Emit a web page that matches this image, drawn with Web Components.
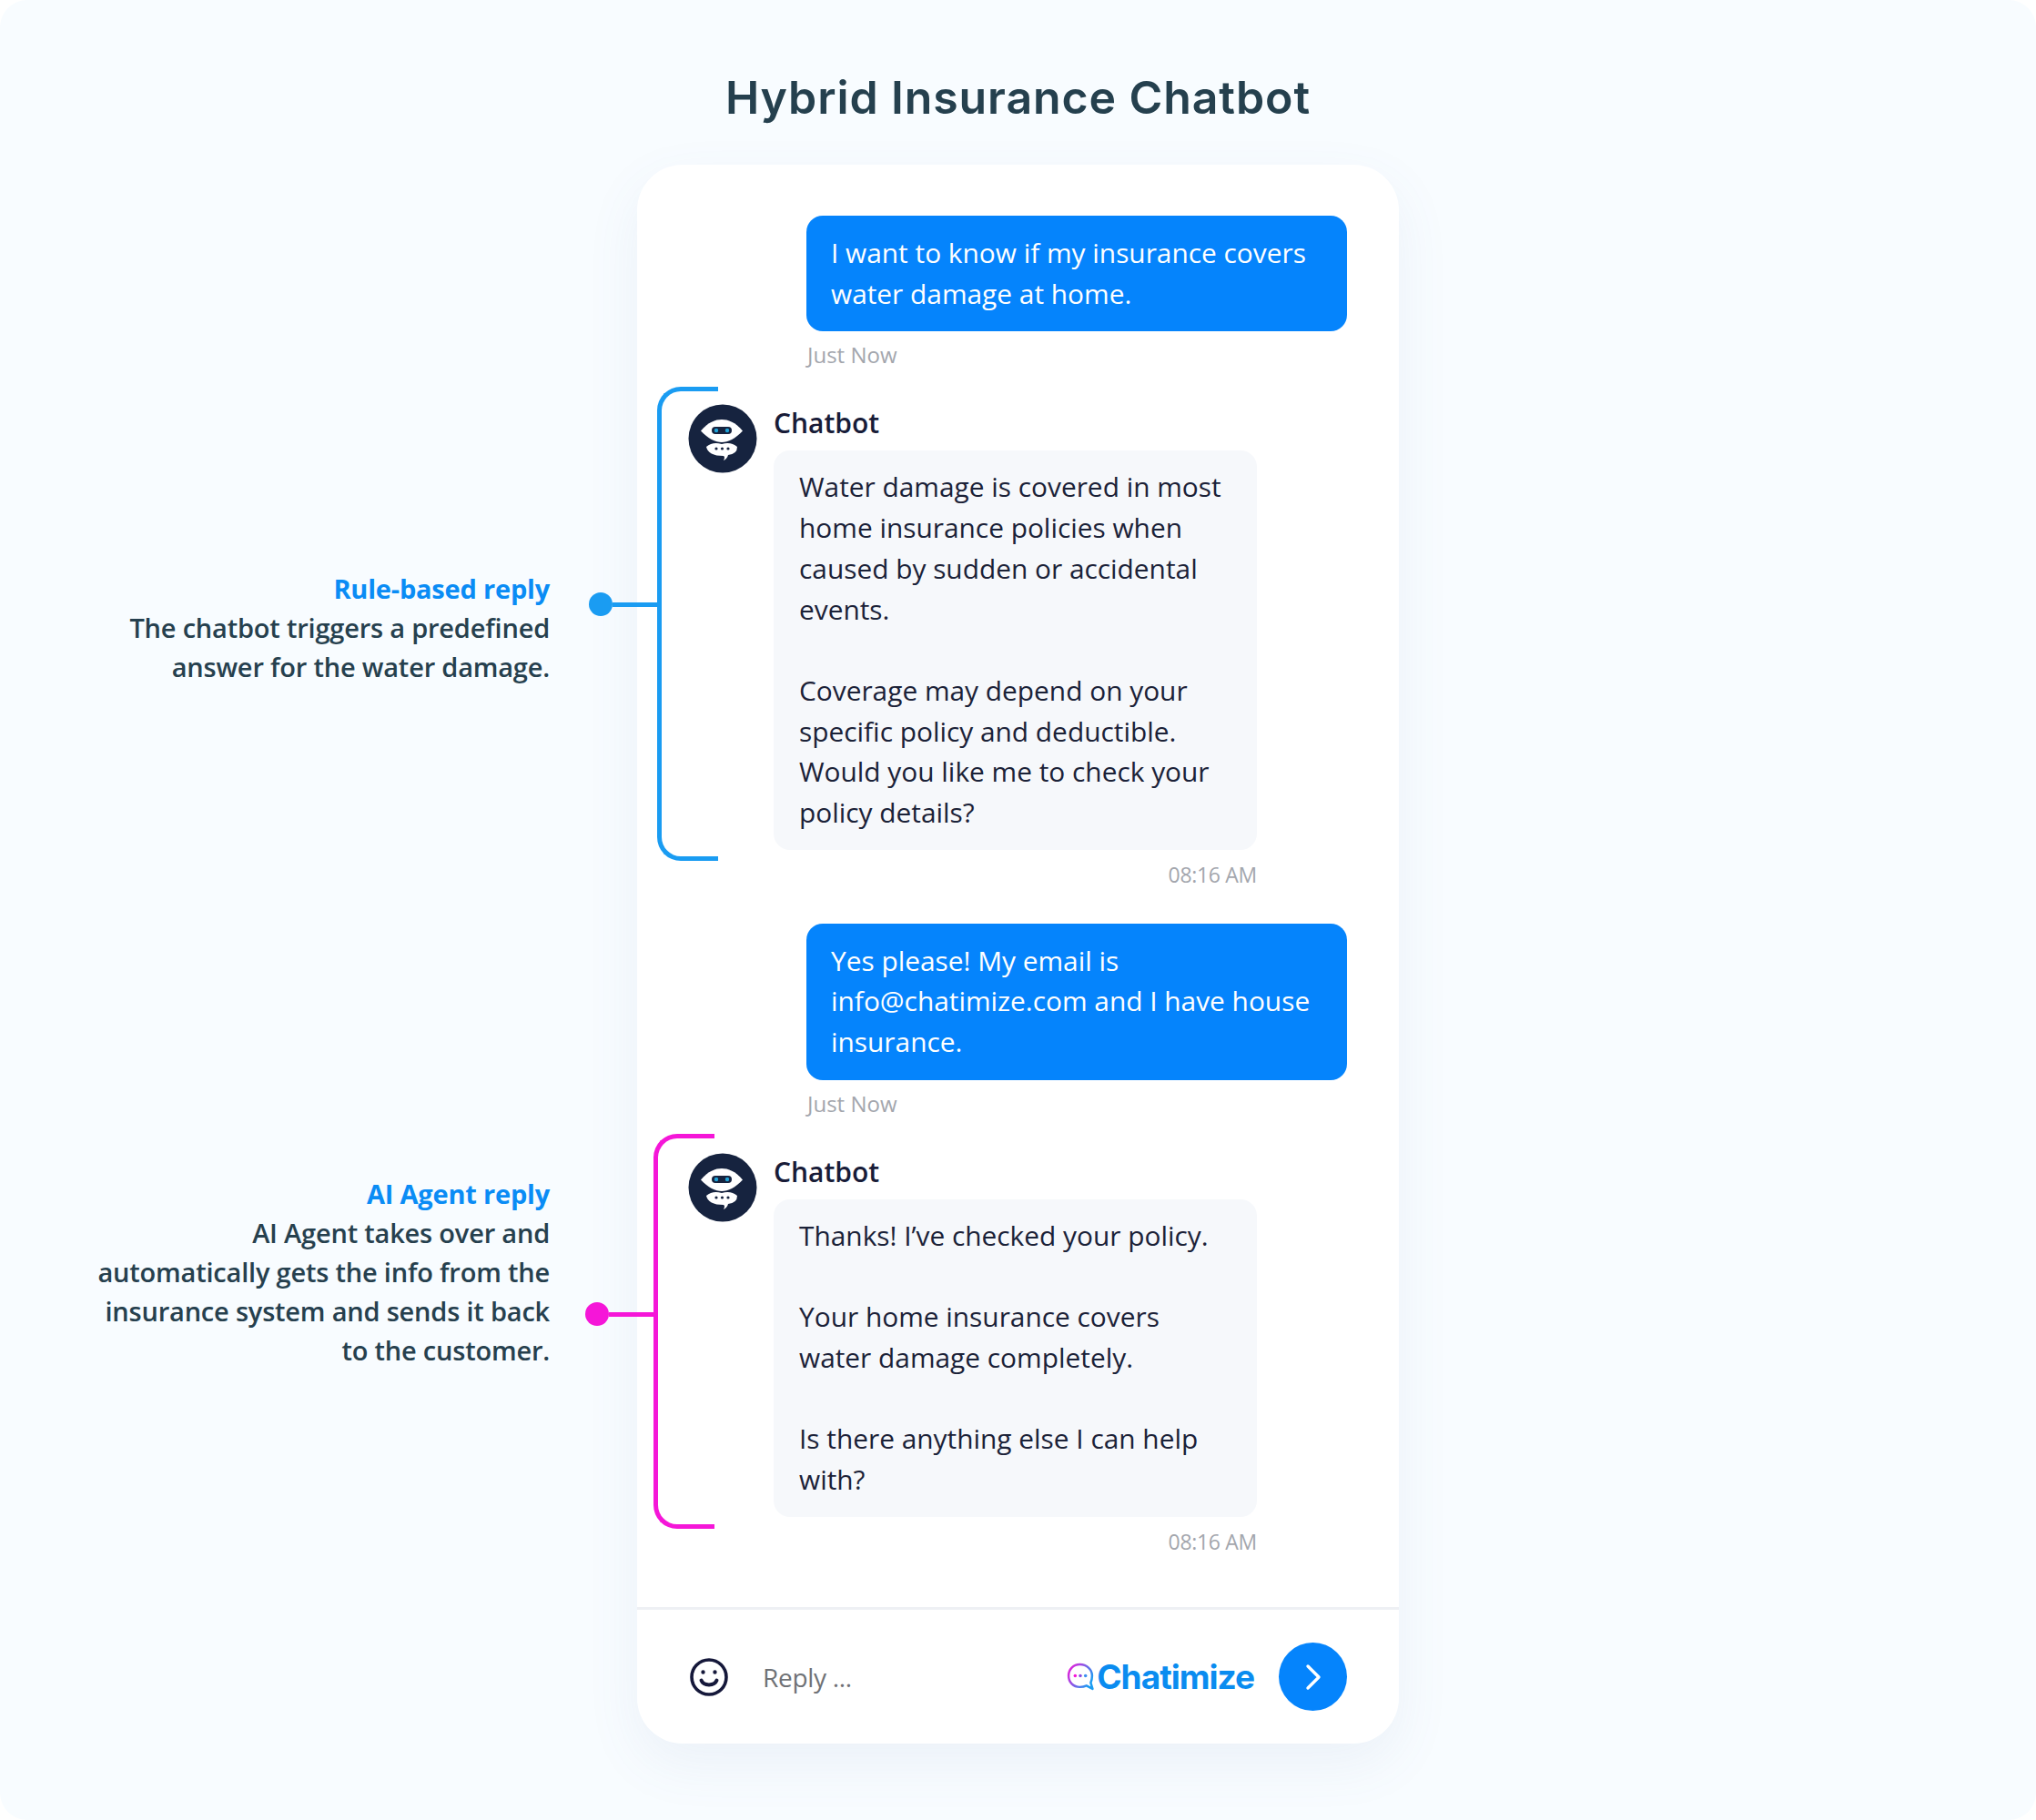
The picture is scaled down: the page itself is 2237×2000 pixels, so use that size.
<!DOCTYPE html>
<html lang="en">
<head>
<meta charset="utf-8">
<title>Hybrid Insurance Chatbot</title>
<style>
    html, body {
        margin: 0;
        background: #ffffff;
    }
</style>
</head>
<body>
<hybrid-page>
    <span slot="title">Hybrid Insurance Chatbot</span>

    <side-note slot="notes" heading="Rule-based reply" color="#1a9cf2" dot="39" offset="444" line="62" dotgap="25">
        The chatbot triggers a predefined<br>answer for the water damage.
    </side-note>
    <side-note slot="notes" heading="AI Agent reply" color="#f516d8" dot="154" offset="536" line="63" dotgap="21">
        AI Agent takes over and<br>automatically gets the info from the<br>insurance system and sends it back<br>to the customer.
    </side-note>

    <chat-card>
        <user-message time="Just Now">I want to know if my insurance covers water damage at home.</user-message>
        <bot-message time="08:16 AM" color="#1a9cf2" left="-34" top="-23" bottom="31" gap="38">
            Water damage is covered in most home insurance policies when caused by sudden or accidental events.<br><br>Coverage may depend on your specific policy and deductible. Would you like me to check your policy details?
        </bot-message>
        <user-message time="Just Now">Yes please! My email is info@chatimize.com and I have house insurance.</user-message>
        <bot-message time="08:16 AM" color="#f516d8" left="-38" top="-25" bottom="30" gap="57">
            Thanks! I’ve checked your policy.<br><br>Your home insurance covers water damage completely.<br><br>Is there anything else I can help with?
        </bot-message>
        <chat-footer slot="footer"></chat-footer>
    </chat-card>
</hybrid-page>

<script>
class HybridPage extends HTMLElement {
    connectedCallback() {
        this.attachShadow({mode: 'open'}).innerHTML = `
        <style>
            :host {
                display: block;
                height: 2000px;
                background: #f8fcff;
                border-radius: 30px;
                overflow: hidden;
            }
            h1 {
                margin: 0;
                height: 181px;
                padding-top: 78px;
                box-sizing: border-box;
                text-align: center;
                font: 600 50px/58px Inter, sans-serif;
                letter-spacing: 0.9px;
                color: #25404e;
            }
            .stage {
                display: flex;
            }
            .notes {
                flex: 0 0 700px;
                min-width: 0;
                display: flex;
                flex-direction: column;
                position: relative;
                z-index: 1;
            }
        </style>
        <h1><slot name="title"></slot></h1>
        <div class="stage">
            <div class="notes"><slot name="notes"></slot></div>
            <slot></slot>
        </div>
        `;
    }
}

class SideNote extends HTMLElement {
    connectedCallback() {
        const color = this.getAttribute('color');
        this.attachShadow({mode: 'open'}).innerHTML = `
        <style>
            :host {
                display: flex;
                width: 700px;
                margin-top: ${this.getAttribute('offset')}px;
                font: 600 29px/43px "Open Sans", sans-serif;
                letter-spacing: -0.2px;
                color: #26404e;
            }
            .text {
                flex: 0 0 604px;
                text-align: right;
                white-space: nowrap;
            }
            .heading {
                font-weight: 700;
                color: #0a8cf5;
            }
            .link {
                flex: none;
                display: flex;
                align-items: center;
                height: 26px;
                margin: ${this.getAttribute('dot') - 13}px 0 0 ${this.getAttribute('dotgap') * 1 + 18}px;
            }
            .dot {
                width: 26px;
                height: 26px;
                border-radius: 50%;
                background: ${color};
            }
            .line {
                width: ${this.getAttribute('line') - 13}px;
                height: 5px;
                background: ${color};
            }
        </style>
        <div class="text">
            <div class="heading">${this.getAttribute('heading')}</div>
            <slot></slot>
        </div>
        <div class="link"><div class="dot"></div><div class="line"></div></div>
        `;
    }
}

class ChatCard extends HTMLElement {
    connectedCallback() {
        this.attachShadow({mode: 'open'}).innerHTML = `
        <style>
            :host {
                display: block;
                box-sizing: border-box;
                width: 837px;
                height: 1735px;
                padding-top: 56px;
                background: #ffffff;
                border-radius: 50px;
                box-shadow: 0 22px 60px rgba(90, 120, 170, 0.08);
            }
            .messages {
                height: 1529px;
            }
        </style>
        <div class="messages"><slot></slot></div>
        <slot name="footer"></slot>
        `;
    }
}

class UserMessage extends HTMLElement {
    connectedCallback() {
        this.attachShadow({mode: 'open'}).innerHTML = `
        <style>
            :host {
                display: block;
                margin: 0 57px 0 186px;
                font: 400 29.85px/44.7px "Open Sans", sans-serif;
            }
            .bubble {
                padding: 19px 27px;
                border-radius: 18px;
                background: #0584fc;
                color: #ffffff;
            }
            .time {
                margin-top: 10px;
                padding-left: 1px;
                font-size: 24px;
                line-height: 32px;
                color: #a3a6ad;
            }
        </style>
        <div class="bubble"><slot></slot></div>
        <div class="time">${this.getAttribute('time')}</div>
        `;
    }
}

class BotAvatar extends HTMLElement {
    connectedCallback() {
        this.attachShadow({mode: 'open'}).innerHTML = `
        <style>
            :host { display: block; width: 76px; height: 76px; }
            svg { display: block; }
        </style>
        <svg width="76" height="76" viewBox="0 0 76 76">
            <circle cx="38" cy="38" r="37.5" fill="#16233f"/>
            <path d="M14 29.5C22 20 30 17 37 17C44 17 52 20 60 29.5C52 38 44 42 37 42C30 42 22 38 14 29.5Z" fill="#fff"/>
            <rect x="26" y="25" width="22" height="8" rx="4" fill="#16233f"/>
            <circle cx="31" cy="29" r="2.2" fill="#1fa3d8"/>
            <circle cx="43" cy="29" r="2.2" fill="#1fa3d8"/>
            <path d="M20 47Q27 41 37 44Q47 41 54 47Q54 55 44 56Q43 60 39 62Q41 58 39 57Q22 57 20 47Z" fill="#fff"/>
            <circle cx="31" cy="49" r="1.6" fill="#16233f"/>
            <circle cx="37.5" cy="49" r="1.6" fill="#16233f"/>
            <circle cx="44" cy="49" r="1.6" fill="#16233f"/>
        </svg>
        `;
    }
}

class BotMessage extends HTMLElement {
    connectedCallback() {
        this.attachShadow({mode: 'open'}).innerHTML = `
        <style>
            :host {
                display: flex;
                position: relative;
                width: 625px;
                margin: 42px 0 ${this.getAttribute('gap')}px 56px;
                gap: 18px;
                font: 400 29.85px/44.7px "Open Sans", sans-serif;
                color: #1b2238;
            }
            .bracket {
                position: absolute;
                left: ${this.getAttribute('left')}px;
                top: ${this.getAttribute('top')}px;
                bottom: ${this.getAttribute('bottom')}px;
                width: 67px;
                box-sizing: border-box;
                border: 5px solid ${this.getAttribute('color')};
                border-right: 0;
                border-radius: 26px 0 0 26px;
            }
            bot-avatar {
                flex: none;
                margin-top: -4px;
            }
            .body {
                flex: 1;
                min-width: 0;
            }
            .name {
                font-weight: 600;
                font-size: 30px;
                line-height: 34px;
                margin-bottom: 13px;
                color: #181c38;
            }
            .bubble {
                padding: 18px 28px;
                border-radius: 18px;
                background: #f6f8fb;
            }
            .time {
                margin-top: 11px;
                font-size: 23px;
                line-height: 32px;
                letter-spacing: -0.3px;
                text-align: right;
                color: #a3a6ad;
            }
        </style>
        <div class="bracket"></div>
        <bot-avatar></bot-avatar>
        <div class="body">
            <div class="name">Chatbot</div>
            <div class="bubble"><slot></slot></div>
            <div class="time">${this.getAttribute('time')}</div>
        </div>
        `;
    }
}

class ChatFooter extends HTMLElement {
    connectedCallback() {
        this.attachShadow({mode: 'open'}).innerHTML = `
        <style>
            :host {
                display: flex;
                align-items: center;
                box-sizing: border-box;
                height: 150px;
                padding: 0 57px;
                border-top: 3px solid #eef0f4;
            }
            svg { display: block; flex: none; }
            .smile { margin: 0 38px 0 1px; }
            .reply {
                flex: 1;
                font: 400 28px/40px "Open Sans", sans-serif;
                letter-spacing: -0.3px;
                color: #6f7276;
            }
            .brand {
                margin: 0 27px 0 3px;
                font: 700 37px/44px Inter, sans-serif;
                letter-spacing: -1px;
                color: #0a8cf0;
            }
            .send {
                flex: none;
                display: flex;
                align-items: center;
                justify-content: center;
                width: 75px;
                height: 75px;
                border-radius: 50%;
                background: #0584fc;
            }
        </style>
        <svg class="smile" width="42" height="42" viewBox="0 0 42 42" fill="none" stroke="#15183a" stroke-width="3.6" stroke-linecap="round">
            <circle cx="21" cy="21" r="19"/>
            <path d="M12.5 24.5C15 31 27 31 29.5 24.5" stroke-width="4"/>
            <circle cx="14.5" cy="15.5" r="1.2" fill="#15183a" stroke-width="2"/>
            <circle cx="27.5" cy="15.5" r="1.2" fill="#15183a" stroke-width="2"/>
        </svg>
        <div class="reply">Reply ...</div>
        <svg width="30" height="31" viewBox="0 0 29 30" fill="none">
            <defs>
                <linearGradient id="ring" x1="0" y1="0" x2="1" y2="0.6">
                    <stop offset="0" stop-color="#f516d8"/>
                    <stop offset="1" stop-color="#1a9cf2"/>
                </linearGradient>
            </defs>
            <path d="M14 2C7 2 2 7 2 14C2 21 7 26 14 26C17 26 19 25.500 21 24.500L27.500 28L25.500 21.500C26.500 19 27 17 27 14C27 7 21 2 14 2Z" stroke="url(#ring)" stroke-width="2.4" stroke-linejoin="round"/>
            <circle cx="9" cy="14" r="1.700" fill="#f516d8"/>
            <circle cx="14.500" cy="14" r="1.700" fill="#8a4fe0"/>
            <circle cx="20" cy="14" r="1.700" fill="#3b8ff0"/>
        </svg>
        <div class="brand">Chatimize</div>
        <div class="send">
            <svg width="18" height="30" viewBox="0 0 18 30" fill="none" stroke="#fff" stroke-width="3.4" stroke-linecap="round" stroke-linejoin="round">
                <path d="M3 3L15 15L3 27"/>
            </svg>
        </div>
        `;
    }
}

customElements.define('bot-avatar', BotAvatar);
customElements.define('side-note', SideNote);
customElements.define('user-message', UserMessage);
customElements.define('bot-message', BotMessage);
customElements.define('chat-footer', ChatFooter);
customElements.define('chat-card', ChatCard);
customElements.define('hybrid-page', HybridPage);
</script>
</body>
</html>
